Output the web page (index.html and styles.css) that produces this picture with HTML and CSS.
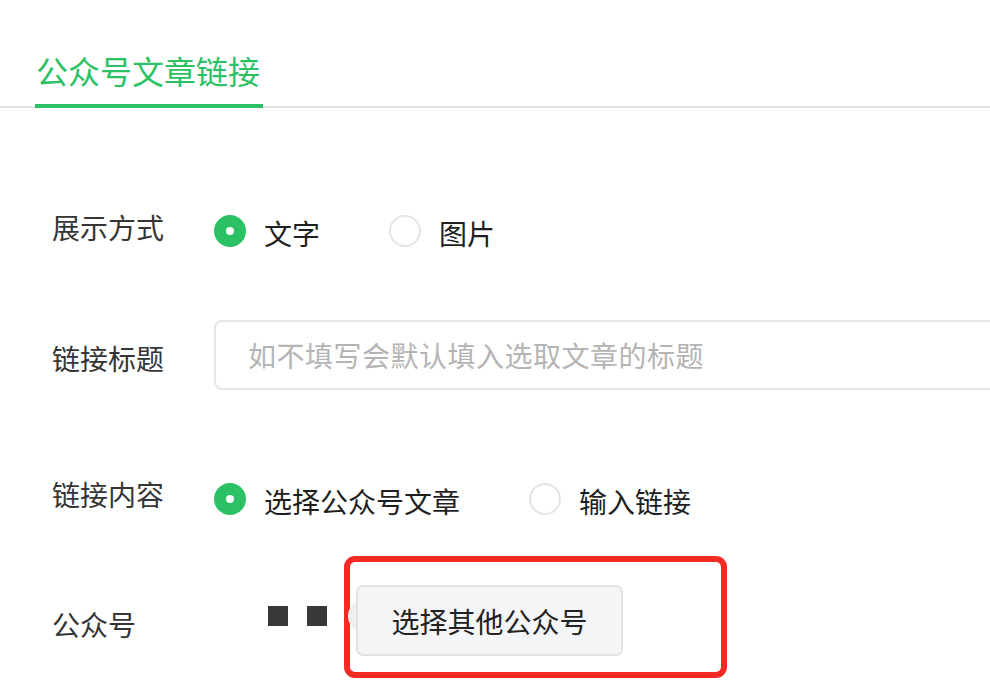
FILE: index.html
```html
<!DOCTYPE html>
<html lang="zh">
<head>
<meta charset="utf-8">
<title>公众号文章链接</title>
<link rel="stylesheet" href="styles.css">
</head>
<body>
<div class="tabs">
  <div class="tab">公众号文章链接</div>
</div>
<div class="form">
  <div class="row row-display">
    <div class="label">展示方式</div>
    <div class="options">
      <label class="option"><span class="radio checked"></span><span class="opt-text">文字</span></label>
      <label class="option"><span class="radio"></span><span class="opt-text">图片</span></label>
    </div>
  </div>
  <div class="row row-title">
    <div class="label">链接标题</div>
    <input class="text-input" type="text" placeholder="如不填写会默认填入选取文章的标题">
  </div>
  <div class="row row-content">
    <div class="label">链接内容</div>
    <div class="options">
      <label class="option"><span class="radio checked"></span><span class="opt-text">选择公众号文章</span></label>
      <label class="option"><span class="radio"></span><span class="opt-text">输入链接</span></label>
    </div>
  </div>
  <div class="row row-account">
    <div class="label">公众号</div>
    <div class="squares"><span class="sq"></span><span class="sq"></span></div>
    <div class="highlight">
      <span class="ghost"></span>
      <button class="btn" type="button">选择其他公众号</button>
    </div>
  </div>
</div>
</body>
</html>
```
FILE: styles.css
```css
html, body {
  margin: 0;
  padding: 0;
  background: #ffffff;
  overflow: hidden;
}
body {
  font-family: "Noto Sans CJK SC", "Noto Sans", sans-serif;
  color: #353535;
}
.tabs {
  display: flex;
  padding: 52px 0 0 35px;
  border-bottom: 2px solid #e3e3e3;
}
.tab {
  font-size: 32px;
  line-height: 36px;
  color: #2bc164;
  padding: 0 1px 16px 1px;
  width: 226px;
  border-bottom: 4px solid #2bc164;
  margin-bottom: -2px;
}
.form {
  padding-left: 52px;
}
.row {
  display: flex;
  align-items: flex-start;
}
.label {
  width: 162px;
  flex-shrink: 0;
  font-size: 28px;
  line-height: 40px;
  color: #353535;
}
.options {
  display: flex;
}
.option {
  display: flex;
  align-items: center;
  margin-right: 69px;
}
.radio {
  width: 32px;
  height: 32px;
  box-sizing: border-box;
  border-radius: 50%;
  border: 2px solid #e4e4e4;
  background: #ffffff;
  flex-shrink: 0;
  display: flex;
  align-items: center;
  justify-content: center;
}
.radio.checked {
  border-color: #2bc164;
  background: #2bc164;
}
.radio.checked::after {
  content: "";
  width: 8px;
  height: 8px;
  border-radius: 50%;
  background: #ffffff;
}
.opt-text {
  font-size: 28px;
  line-height: 40px;
  padding-top: 4px;
  margin-left: 18px;
  color: #1f1f1f;
}
.row-display {
  margin-top: 92px;
}
.row-display .label {
  margin-top: 7px;
}
.row-display .options {
  margin-top: 9px;
}
.row-title {
  margin-top: 67px;
}
.row-title .label {
  margin-top: 18px;
}
.text-input {
  flex-shrink: 0;
  width: 820px;
  height: 70px;
  box-sizing: border-box;
  border: 2px solid #e5e5e5;
  border-radius: 8px;
  padding: 0 32px;
  font-family: inherit;
  font-size: 28px;
  letter-spacing: 0.5px;
  color: #1f1f1f;
  outline: none;
  background: #ffffff;
}
.text-input::placeholder {
  color: #b4b4b4;
}
.row-content {
  margin-top: 76px;
}
.row-content .label {
  margin-top: 8px;
}
.row-content .options {
  margin-top: 11px;
}
.row-account {
  margin-top: 35px;
}
.row-account .label {
  width: 162px;
  margin-top: 48px;
}
.squares {
  display: flex;
  gap: 19px;
  margin-left: 54px;
  margin-top: 50px;
}
.sq {
  width: 20px;
  height: 20px;
  background: #383838;
}
.highlight {
  position: relative;
  margin-left: 17px;
  border: 6px solid #f42b25;
  border-radius: 11px;
  padding: 23px 98px 16px 6px;
}
.ghost {
  position: absolute;
  left: -2px;
  top: 38px;
  width: 32px;
  height: 32px;
  border-radius: 50%;
  background: #efefef;
}
.btn {
  position: relative;
  display: block;
  width: 267px;
  height: 71px;
  box-sizing: border-box;
  border: 2px solid #e2e2e2;
  border-radius: 7px;
  background: #f4f5f7;
  font-family: inherit;
  font-size: 28px;
  color: #222222;
  padding: 0;
}
```
